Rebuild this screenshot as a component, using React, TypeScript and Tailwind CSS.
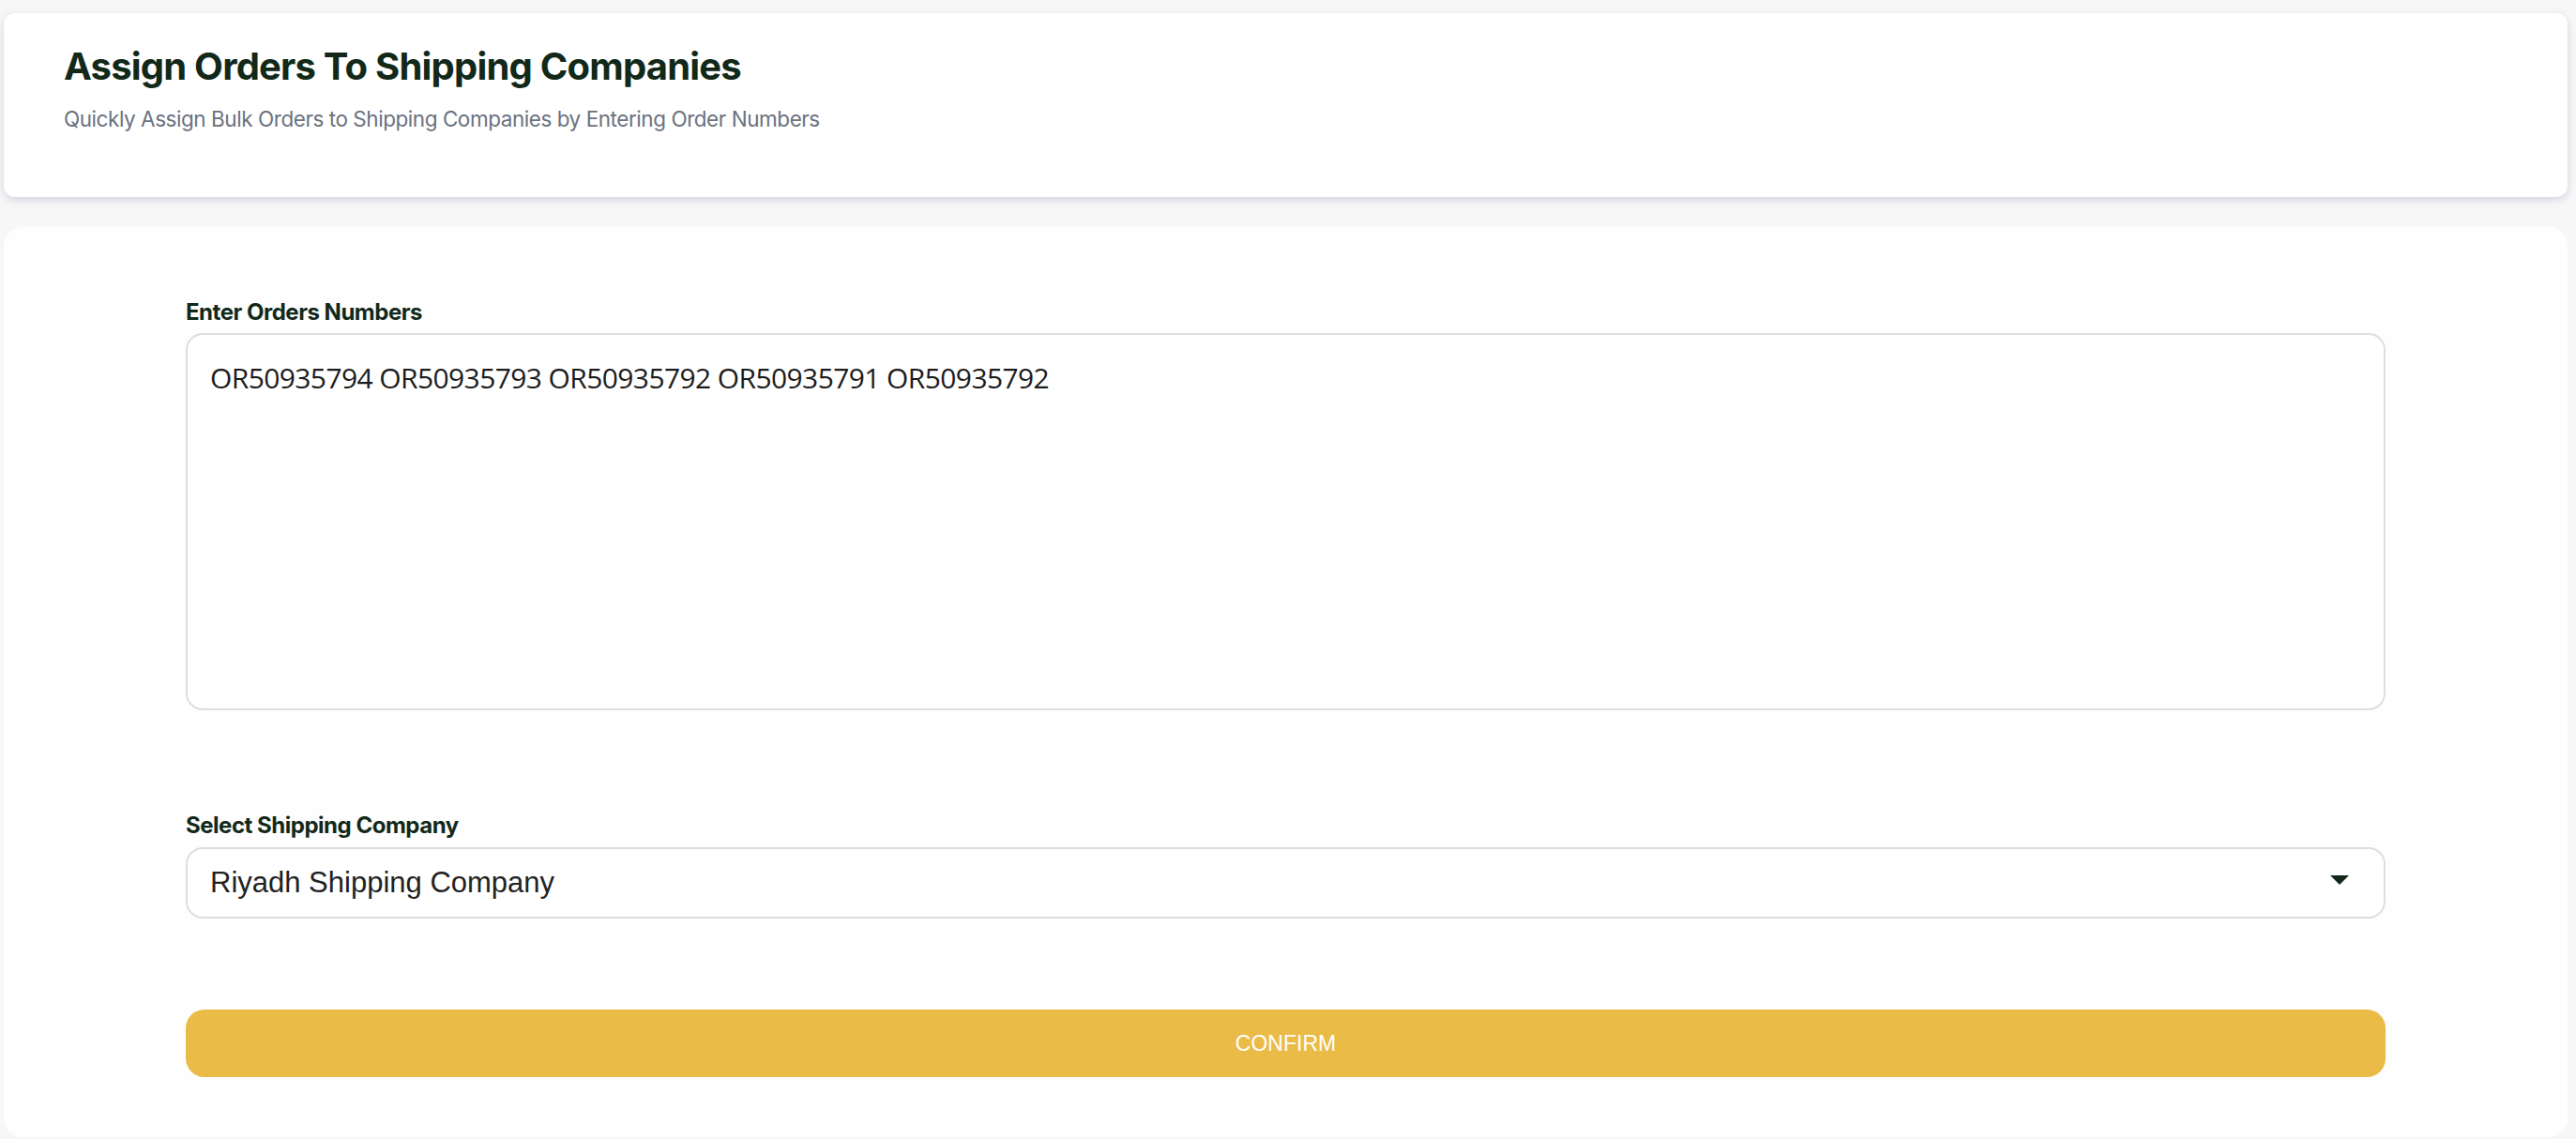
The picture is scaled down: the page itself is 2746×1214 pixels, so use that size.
import React from "react";

export default function App() {
  return (
    <div className="min-h-[1214px] w-full bg-[#f7f7f7] pl-[4px] pr-[9px] pt-[14px] pb-[2px]">
      <div className="flex h-[196px] flex-col rounded-[12px] bg-white pl-[64px] pt-[33px] shadow-[0_3px_8px_rgba(110,125,170,0.28)]">
        <h1 className="font-['Inter',sans-serif] text-[40px] font-bold leading-[48px] tracking-[-0.02em] text-[#12291a]">
          Assign Orders To Shipping Companies
        </h1>
        <p className="mt-[18px] font-['Inter',sans-serif] text-[22.5px] leading-[28px] tracking-[-0.02em] text-[#6b7280]">
          Quickly Assign Bulk Orders to Shipping Companies by Entering Order Numbers
        </p>
      </div>

      <div className="mt-[32px] flex h-[970px] flex-col rounded-[20px] bg-[#fefefe] px-[194px] pt-[77px]">
        <label className="font-['Inter',sans-serif] text-[24px] font-bold leading-[28px] tracking-[-0.02em] text-[#12291a]">
          Enter Orders Numbers
        </label>
        <div className="mt-[8px] h-[402px] rounded-[18px] border-2 border-[#dedede] bg-white px-[24px] pt-[26px]">
          <div className="font-['Open_Sans','Noto_Sans',sans-serif] text-[30px] leading-[40px] tracking-[-0.02em] text-[#1c1c1c]">
            OR50935794 OR50935793 OR50935792 OR50935791 OR50935792
          </div>
        </div>

        <label className="mt-[109px] font-['Inter',sans-serif] text-[24px] font-bold leading-[28px] tracking-[-0.02em] text-[#12291a]">
          Select Shipping Company
        </label>
        <div className="mt-[9px] flex h-[76px] items-center justify-between rounded-[18px] border-2 border-[#dedede] bg-white pl-[24px] pr-[37px]">
          <span className="font-['Liberation_Sans',Arial,sans-serif] text-[31px] leading-[36px] text-[#222222]">
            Riyadh Shipping Company
          </span>
          <svg width="20" height="10" viewBox="0 0 20 10" className="mt-[-6px]">
            <polygon points="0,0 20,0 10,10" fill="#12291a" />
          </svg>
        </div>

        <button className="mt-[97px] flex h-[72px] w-full items-center justify-center rounded-[20px] bg-[#ebbb47] font-['Liberation_Sans',Arial,sans-serif] text-[23px] text-white">
          CONFIRM
        </button>
      </div>
    </div>
  );
}
